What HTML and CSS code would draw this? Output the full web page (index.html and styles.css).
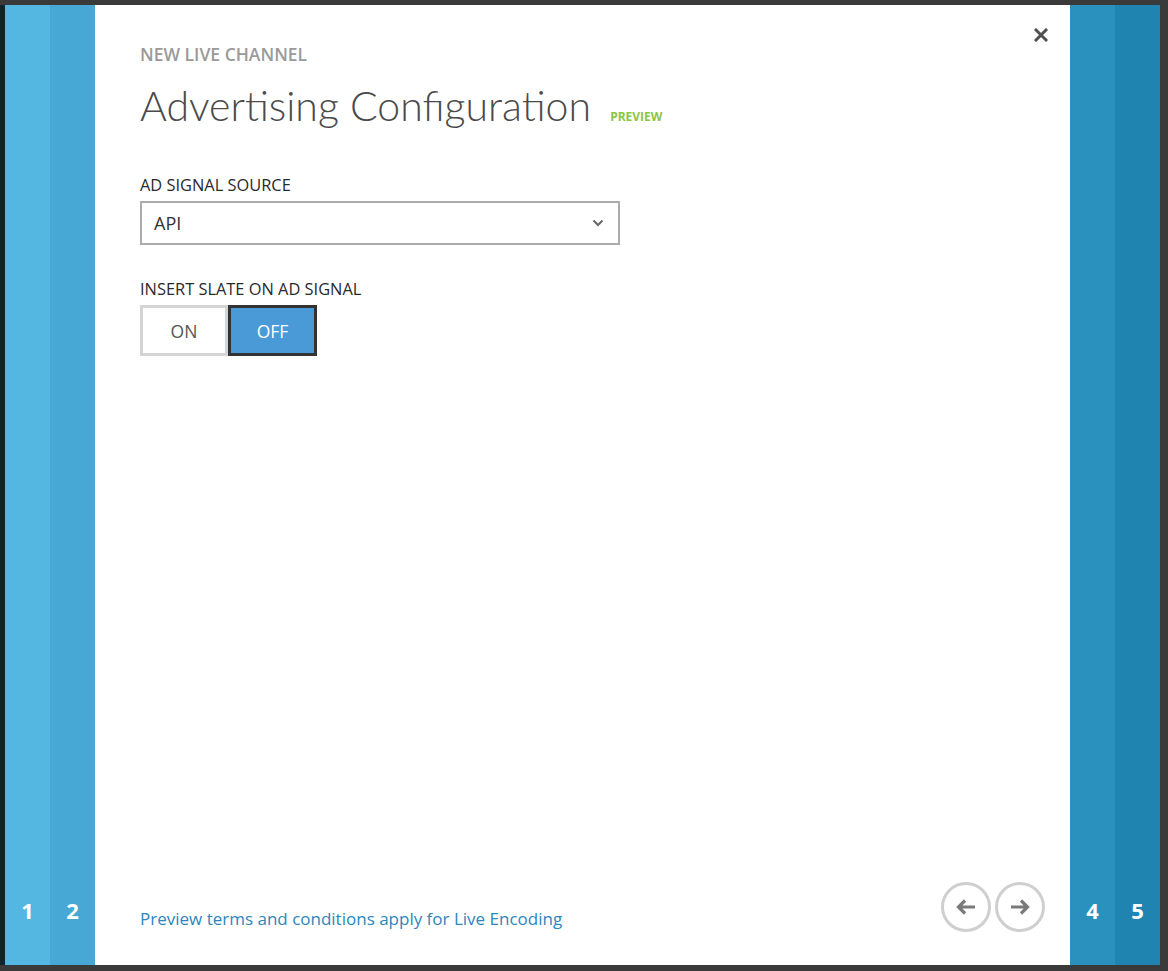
FILE: index.html
```html
<!DOCTYPE html>
<html lang="en">
<head>
    <meta charset="UTF-8">
    <title>New Live Channel - Advertising Configuration</title>
    <link rel="stylesheet" href="styles.css">
</head>
<body>

    <div class="wizard">
        <!-- Trin til venstre -->
        <div class="step step-1"><span>1</span></div>
        <div class="step step-2"><span>2</span></div>

        <div class="panel">
            <button class="close" aria-label="Close">
                <svg width="14" height="14" viewBox="0 0 14 14"><path d="M2 2 L12 12 M12 2 L2 12" stroke="#505050" stroke-width="3" stroke-linecap="square"/></svg>
            </button>

            <div class="content">
                <div class="subtitle">NEW LIVE CHANNEL</div>
                <h1>Advertising Configuration <span class="badge">PREVIEW</span></h1>

                <label class="field-label" for="adSource">AD SIGNAL SOURCE</label>
                <div class="select-box">
                    <span>API</span>
                    <svg width="12" height="8" viewBox="0 0 12 8"><path d="M1.5 1.5 L6 6 L10.5 1.5" fill="none" stroke="#666" stroke-width="2"/></svg>
                </div>

                <div class="field-label">INSERT SLATE ON AD SIGNAL</div>
                <div class="toggle">
                    <div class="toggle-btn">ON</div>
                    <div class="toggle-btn active">OFF</div>
                </div>
            </div>

            <!-- Bund: link og navigation -->
            <div class="footer">
                <a class="terms" href="#">Preview terms and conditions apply for Live Encoding</a>
                <div class="nav">
                    <button class="nav-btn" aria-label="Back">
                        <svg width="22" height="18" viewBox="0 0 22 18"><path d="M20 9 H4 M10 2.5 L3.5 9 L10 15.5" fill="none" stroke="#7a7a7a" stroke-width="3.2"/></svg>
                    </button>
                    <button class="nav-btn" aria-label="Next">
                        <svg width="22" height="18" viewBox="0 0 22 18"><path d="M2 9 H18 M12 2.5 L18.5 9 L12 15.5" fill="none" stroke="#7a7a7a" stroke-width="3.2"/></svg>
                    </button>
                </div>
            </div>
        </div>

        <!-- Trin til højre -->
        <div class="step step-4"><span>4</span></div>
        <div class="step step-5"><span>5</span></div>
    </div>

</body>
</html>
```

FILE: styles.css
```css
/* Baggrund bag guiden */
body {
    margin: 0;
    padding: 0;
    background-color: #3a3a3a;
    font-family: 'Open Sans', 'Noto Sans', sans-serif;
    height: 971px;
    overflow: hidden;
}

.wizard {
    display: flex;
    height: 960px;
    margin: 5px 8px 6px 5px;
    box-shadow: -5px 0 0 #10252b;
}

/* Trin-kolonner */
.step {
    width: 45px;
    flex: 0 0 45px;
    display: flex;
    align-items: flex-end;
    justify-content: center;
    color: white;
    font-weight: 700;
    font-size: 22px;
}

.step span {
    margin-bottom: 40px;
}

.step-1 { background-color: #53b7e2; }
.step-2 { background-color: #47a8d6; }
.step-4 { background-color: #2a90be; }
.step-5 { background-color: #1f84af; }

/* Hovedpanel */
.panel {
    flex: 1;
    background-color: #fff;
    position: relative;
    display: flex;
    flex-direction: column;
    justify-content: space-between;
    padding: 0 25px 33px 45px;
}

.close {
    position: absolute;
    top: 23px;
    right: 22px;
    background: none;
    border: none;
    padding: 0;
    cursor: pointer;
}

.content {
    padding-top: 37px;
}

.subtitle {
    font-size: 17.5px;
    font-weight: 600;
    color: #9a9a9a;
}

h1 {
    margin: 15px 0 42px;
    font-family: 'Lato', 'Open Sans', sans-serif;
    font-size: 41px;
    font-weight: 300;
    color: #4a4a4a;
    line-height: 50px;
}

.badge {
    font-family: 'Open Sans', sans-serif;
    font-size: 12px;
    font-weight: 700;
    line-height: 1;
    color: #8cc63f;
    margin-left: 8px;
}

.field-label {
    display: block;
    font-size: 16.4px;
    color: #2a2a2a;
    margin-bottom: 5px;
}

.select-box {
    width: 480px;
    height: 44px;
    box-sizing: border-box;
    border: 2px solid #ababab;
    display: flex;
    align-items: center;
    justify-content: space-between;
    padding: 0 14px 0 12px;
    font-size: 18px;
    color: #333;
    margin-bottom: 32px;
}

/* Til/fra knapper */
.toggle {
    display: flex;
}

.toggle-btn {
    width: 88px;
    height: 51px;
    box-sizing: border-box;
    border: 3px solid #d4d4d4;
    display: flex;
    align-items: center;
    justify-content: center;
    font-size: 17.5px;
    color: #555;
}

.toggle-btn.active {
    width: 89px;
    background-color: #4a9ad8;
    border-color: #333;
    color: #fff;
}

.footer {
    display: flex;
    justify-content: space-between;
    align-items: center;
}

.terms {
    color: #2e86bb;
    font-size: 17px;
    text-decoration: none;
    margin-top: 22px;
}

.nav {
    display: flex;
    gap: 4px;
}

.nav-btn {
    width: 50px;
    height: 50px;
    border-radius: 50%;
    border: 3px solid #cfcfcf;
    background: #fff;
    display: flex;
    align-items: center;
    justify-content: center;
    padding: 0;
    cursor: pointer;
}
```
